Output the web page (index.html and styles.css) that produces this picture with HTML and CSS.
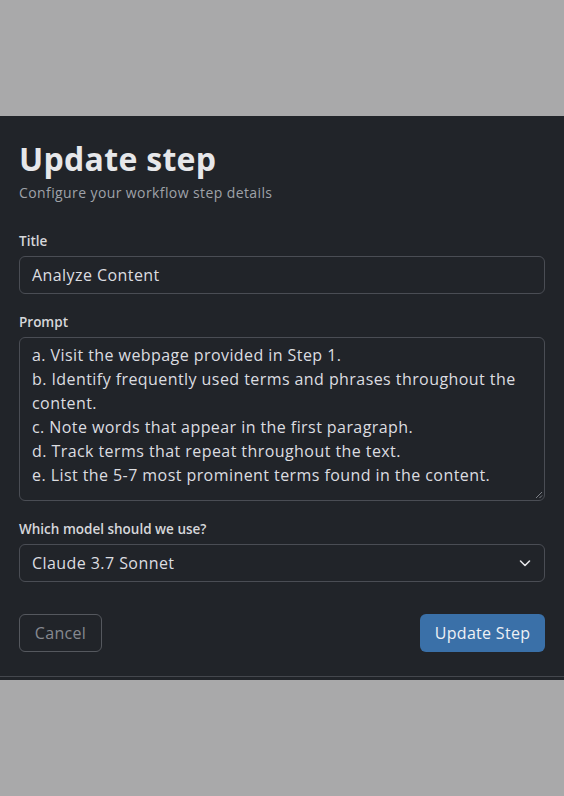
FILE: index.html
```html
<!DOCTYPE html>
<html lang="en">
<head>
<meta charset="utf-8">
<title>Update step</title>
<link rel="stylesheet" href="styles.css">
</head>
<body>
<div class="backdrop-top"></div>
<div class="dialog">
  <div class="dialog-body">
    <h1 class="heading">Update step</h1>
    <p class="subtitle">Configure your workflow step details</p>

    <label class="label label-first">Title</label>
    <div class="field">Analyze Content</div>

    <label class="label">Prompt</label>
    <div class="field field-area">
      <div class="line">a. Visit the webpage provided in Step 1.</div>
      <div class="line">b. Identify frequently used terms and phrases throughout the</div>
      <div class="line">content.</div>
      <div class="line">c. Note words that appear in the first paragraph.</div>
      <div class="line">d. Track terms that repeat throughout the text.</div>
      <div class="line">e. List the 5-7 most prominent terms found in the content.</div>
      <svg class="grip" width="8" height="8" viewBox="0 0 8 8"><path d="M7 1L1 7M7 4.5L4.5 7" stroke="#7d8087" stroke-width="1" fill="none"/></svg>
    </div>

    <label class="label">Which model should we use?</label>
    <div class="field field-select">
      <span>Claude 3.7 Sonnet</span>
      <svg class="chevron" width="14" height="14" viewBox="0 0 14 14"><path d="M2.5 5L7 9.5L11.5 5" stroke="#e3e4e7" stroke-width="1.6" fill="none" stroke-linecap="round" stroke-linejoin="round"/></svg>
    </div>

    <div class="actions">
      <button class="btn btn-cancel">Cancel</button>
      <button class="btn btn-primary">Update Step</button>
    </div>
  </div>
  <div class="dialog-foot"></div>
</div>
</body>
</html>
```
FILE: styles.css
```css
* { box-sizing: border-box; }
html, body {
  margin: 0;
  padding: 0;
  background: #a9a9aa;
  font-family: "Open Sans", "DejaVu Sans", sans-serif;
}
.backdrop-top { height: 116px; }
.dialog {
  background: #212429;
  height: 564px;
  display: flex;
  flex-direction: column;
}
.dialog-body {
  flex: 1;
  padding: 23px 19px 0 19px;
  display: flex;
  flex-direction: column;
}
.dialog-foot {
  height: 4px;
  border-top: 1px solid #44474d;
}
.heading {
  margin: 0;
  font-size: 32px;
  line-height: 40px;
  font-weight: 700;
  color: #e6e7ea;
  letter-spacing: 0.3px;
}
.subtitle {
  margin: 4px 0 0 0;
  font-size: 14px;
  line-height: 20px;
  color: #9fa2a8;
  letter-spacing: 0.4px;
}
.label {
  display: block;
  font-size: 13.5px;
  line-height: 20px;
  font-weight: 600;
  color: #d6d7da;
  margin: 18px 0 5px 0;
}
.label-first { margin-top: 28px; }
.field {
  border: 1px solid #4a4d54;
  border-radius: 6px;
  height: 38px;
  padding: 0 12px;
  display: flex;
  align-items: center;
  font-size: 16px;
  letter-spacing: 0.43px;
  color: #dcdde0;
}
.field-area {
  height: 164px;
  display: block;
  padding: 5px 12px 10px 12px;
  position: relative;
}
.line {
  line-height: 24px;
  white-space: nowrap;
}
.grip {
  position: absolute;
  right: 1px;
  bottom: 1px;
}
.field-select {
  justify-content: space-between;
  padding-right: 12px;
}
.chevron { display: block; }
.actions {
  margin-top: 32px;
  display: flex;
  justify-content: space-between;
}
.btn {
  height: 38px;
  border-radius: 6px;
  font-family: inherit;
  font-size: 16px;
  letter-spacing: 0.3px;
  padding: 0 12px;
}
.btn-cancel {
  width: 83px;
  background: transparent;
  border: 1px solid #55585e;
  color: #868990;
}
.btn-primary {
  width: 125px;
  background: #3a70a8;
  border: none;
  color: #eef1f5;
  font-weight: 500;
}
```
